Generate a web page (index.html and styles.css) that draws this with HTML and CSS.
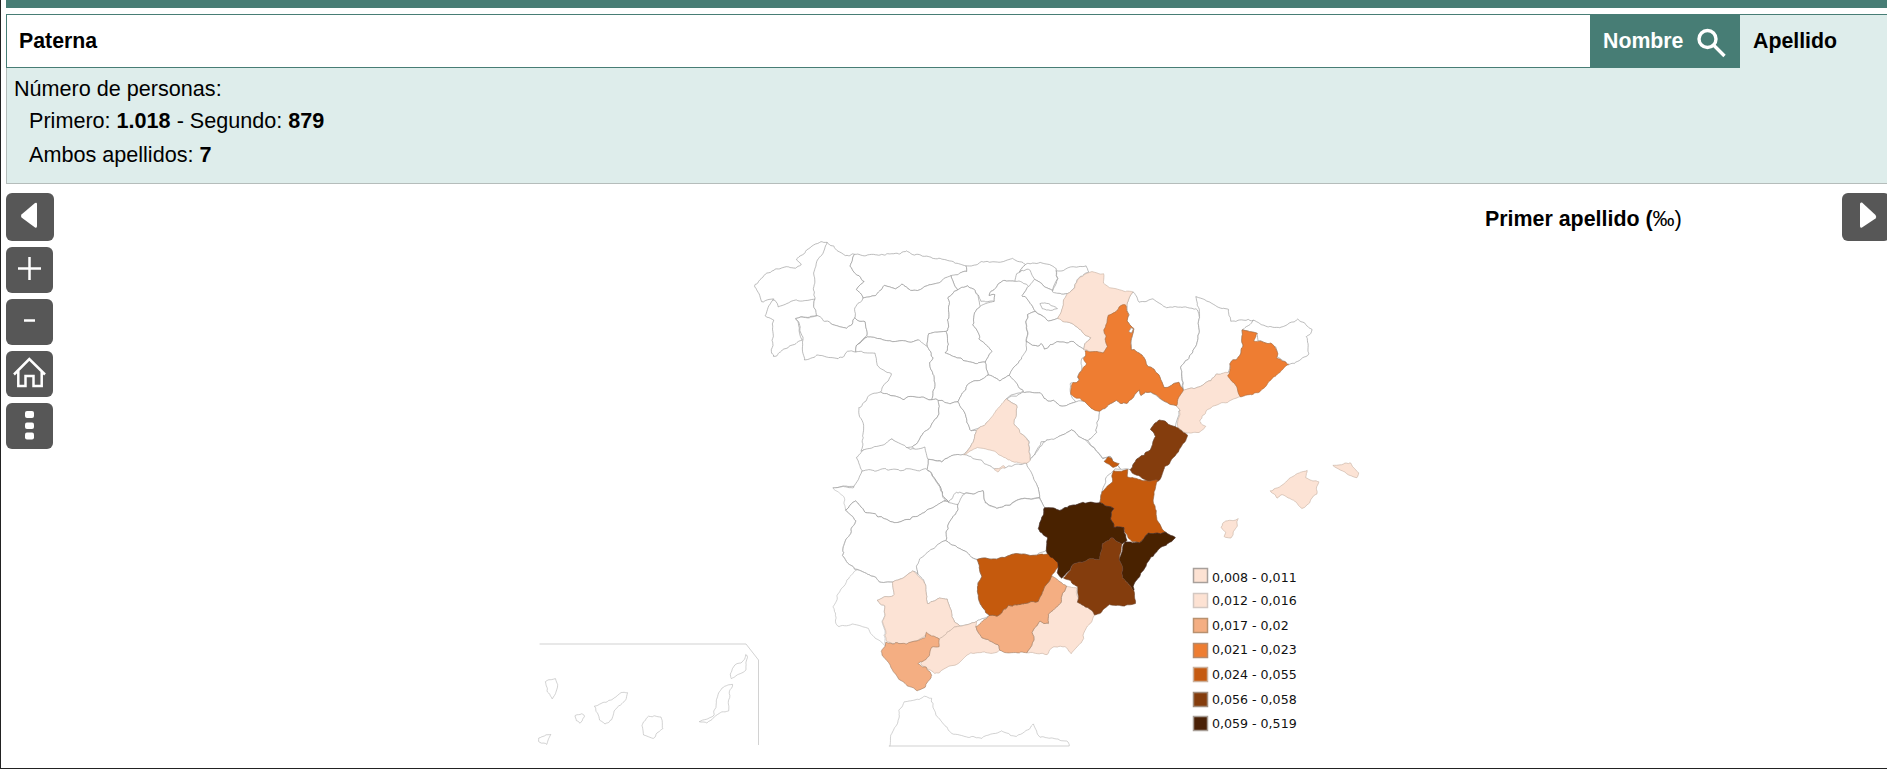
FILE: index.html
```html
<!DOCTYPE html>
<html lang="es">
<head>
<meta charset="utf-8">
<title>Paterna</title>
<link rel="stylesheet" href="styles.css">
<script src="map.js" defer></script>
</head>
<body>
<div class="topbar"></div>
<div class="search">
  <div class="query">Paterna</div>
  <div class="tab active">Nombre
    <svg class="glass" width="30" height="30" viewBox="0 0 30 30"><circle cx="11.500" cy="11" r="8.500"/><path d="M17.500 17l11 11"/></svg>
  </div>
  <div class="tab">Apellido</div>
</div>
<div class="panel">
  <p class="line">Número de personas:</p>
  <p class="line sub">Primero: <b>1.018</b> - Segundo: <b>879</b></p>
  <p class="line sub">Ambos apellidos: <b>7</b></p>
</div>
<main class="map-area">
  <svg class="map" width="1887" height="585" viewBox="0 184 1887 585">
    <defs>
      <filter id="soft" x="-2%" y="-2%" width="104%" height="104%">
        <feGaussianBlur stdDeviation="0.300"/>
      </filter>
    </defs>
    <g id="provinces" filter="url(#soft)">
      <g transform="translate(740 230) scale(.33333)">
        <path class="w" d="M255 35L225 45 170 85 185 100 165 115 100 115 60 145 40 170 60 215 95 210 70 255 95 270 95 380 165 345 185 330 165 265 225 255 218 205 165 210 110 230 95 210"/>
        <path class="w" d="M255 35L218 130 218 205 225 265 270 285 320 295 345 265 365 200 350 175 365 150 325 110 340 75 310 75z"/>
        <path class="w" d="M165 265L225 258 270 285 320 295 345 265 375 280 380 315 345 350 345 365 320 365 290 390 230 375 190 390 185 350 187 320z"/>
        <path class="w" d="M340 75L400 75 460 72 500 58 520 75 600 90 675 105 675 125 635 140 610 150 560 170 510 185 480 165 460 178 430 168 410 190 365 200 350 175 365 150 325 110z"/>
        <path class="w" d="M675 105L770 95 810 85 855 105 825 130 820 150 790 150 750 180 745 200 765 195 760 215 720 215 700 185 680 170 645 175 630 140 675 125z"/>
        <path class="w" d="M365 200L410 190 430 168 460 178 480 165 510 185 560 170 630 140 645 175 625 200 620 300 610 305 565 315 560 350 545 350 530 335 480 335 380 320 345 350 380 315 375 280 345 265 345 235z"/>
        <path class="w" d="M645 175L680 170 700 185 720 225 705 235 700 285 720 330 755 365 735 395 700 400 650 380 610 370 620 340 610 305 620 300 625 200z"/>
        <path class="w" d="M760 215L720 225 705 235 700 285 720 330 755 365 735 395 745 435 775 450 805 435 840 390 860 370 885 350 860 340 860 250 880 245 860 205 840 195 860 170 830 150 790 150 750 180 745 200 765 195z"/>
        <path class="w" d="M855 105L880 100 910 97 950 115 945 150 930 182 880 150 870 120 830 125z"/>
        <path class="w" d="M860 170L880 150 930 182 981 190 969 215 951 264 920 270 880 245 860 205 840 195z"/>
        <path class="w" d="M895 220L910 215 945 240 925 240 900 232z"/>
        <path class="w" d="M345 350L380 320 480 335 530 335 560 350 575 385 565 400 580 450 570 505 540 500 490 505 420 485 450 432 410 415 400 370 345 365z"/>
        <path class="w" d="M420 485L490 505 540 500 592 510 597 550 570 585 540 620 515 655 490 655 450 630 400 660 362 665 370 600 355 535 385 495z"/>
        <path class="w" d="M565 315L610 305 620 340 610 370 650 380 700 400 735 395 745 435 680 465 650 510 630 518 592 510 570 505 580 450 565 400 575 385 560 350z"/>
        <path class="w" d="M592 510L630 518 650 510 690 600 705 600 700 635 670 670 600 695 565 690 515 655 540 620 570 585 597 550z"/>
        <path class="w" d="M650 510L680 465 745 435 775 450 805 435 848 485 820 495 800 510 770 545 735 575 720 590 690 600z"/>
      </g>
      <path class="w" d="M1027 313L1033 312 1047 320 1057 318 1077 327 1090 338 1082 348 1073 343 1057 342 1043 348 1040 342 1035 347 1027 343z"/>
      <path class="w" d="M1008 375L1020 360 1027 343 1035 347 1040 342 1043 348 1057 342 1073 343 1082 348 1085 352 1078 373 1078 382 1070 383 1070 393 1075 402 1060 405 1047 400 1040 393 1023 392z"/>
      <path class="w" d="M1007 400L1023 392 1040 393 1047 400 1060 405 1075 402 1083 403 1097 412 1097 432 1087 442 1083 440 1070 430 1060 436 1052 440 1040 443 1032 458 1030 460 1027 443 1018 430 1013 423 1015 405z"/>
      <path class="w" d="M1032 458L1042 443 1060 436 1070 430 1083 440 1090 447 1100 457 1108 455 1118 468 1113 468 1105 482 1100 492 1098 502 1073 505 1058 510 1043 507 1037 498 1037 487 1027 470 1025 463z"/>
      <path class="w" d="M928 460L940 462 963 453 995 470 1025 463 1037 487 1037 498 1023 498 997 508 985 503 982 492 965 493 955 493 947 502 937 483 927 470z"/>
      <path class="w" d="M832 487L857 485 860 470 855 457 862 452 890 440 910 450 925 448 928 460 927 470 937 483 947 502 942 500 923 513 910 518 893 522 867 513 853 500 845 510 845 498z"/>
      <g transform="translate(1040 250) scale(.33333)">
        <path class="w" d="M50 60L135 45 145 65 120 78 80 130 30 125 45 100z"/>
        <path class="w" d="M275 128L300 155 340 148 375 175 420 168 465 178 478 205 465 290 420 350 428 425 415 400 370 410 355 375 320 350 300 315 270 300 278 235 258 210 260 170z"/>
        <path class="w" d="M465 145L530 170 560 175 570 215 600 210 640 212 650 240 605 245 605 290 590 330 565 340 560 375 530 375 510 395 430 425 420 350 465 290 478 205z"/>
        <path class="w" d="M605 245L640 212 680 225 715 238 770 212 800 225 815 240 795 260 805 310 745 350 705 320 705 290 650 270 650 245z"/>
        <path class="w" d="M170 487L195 465 225 450 245 460 275 450 295 420 300 435 310 420 385 462 405 465 415 470 405 525 355 515 325 540 340 560 330 595 290 625 265 660 235 655 205 615 180 620 150 590 140 575 170 545z"/>
      </g>
      <g transform="translate(810 470) scale(.33333)">
        <path class="w" d="M65 50L130 50 150 0 350 0 380 40 405 90 395 95 340 130 300 145 250 155 170 130 130 90 105 120"/>
        <path class="w" d="M105 120L130 90 170 130 250 155 300 145 340 130 395 95 440 100 430 130 405 180 400 210 330 265 320 310 305 300 245 340 210 335 140 300 130 300 95 260 100 220 135 150z"/>
        <path class="w" d="M440 100L465 70 515 65 525 100 560 115 640 85 680 85 700 110 695 145 685 175 715 205 700 240 680 255 620 250 560 265 500 268 400 210 405 180 430 130z"/>
        <path class="w" d="M325 265L400 210 500 268 510 320 497 350 505 395 535 435 495 455 470 462 445 465 420 440 405 385 385 385 350 400 345 340 320 310z"/>
        <path class="w2" d="M65 50L100 90 105 120 135 150 100 220 95 260 130 300 140 300 110 330 65 410 75 430 80 470 120 465 170 480 218 530 220 410 197 395 245 370 245 340 210 335 140 300"/>
      </g>
      <g transform="translate(520 620) scale(.35714 .33333)">
        <path class="w2 plain" d="M52 72L630 72 665 120 665 375"/>
        <path class="w2" d="M600 135L625 120 628 105 635 115 630 150 585 175 583 160z"/>
        <path class="w2" d="M565 195L588 192 585 230 580 272 535 290 522 305 503 302 540 280 548 240z"/>
        <path class="w2" d="M355 287L390 290 397 325 370 355 345 345 338 320z"/>
        <path class="w2" d="M205 255L250 245 275 222 300 220 295 235 262 270 258 300 235 315 220 300z"/>
        <path class="w2" d="M150 285L170 282 180 295 165 310 150 300z"/>
        <path class="w2" d="M68 180L95 178 103 205 88 240 75 210z"/>
        <path class="w2" d="M50 355L70 342 82 342 72 372 50 365z"/>
        <path class="w2" d="M1030 378L1070 250 1125 235 1130 230 1150 235 1160 285 1215 345 1270 355 1320 340 1345 335 1390 350 1435 315 1450 350 1530 362 1535 378"/>
        <path class="w2 plain" d="M1030 378L1535 378"/>
      </g>
      <g transform="translate(1040 250) scale(.33333)">
        <path class="c1" d="M155 62L190 70 190 100 210 110 275 128 260 170 245 170 205 195 190 240 200 290 185 310 155 305 125 295 150 265 110 230 50 205 70 150 80 130 120 80z"/>
        <path class="c1" d="M565 370L580 405 595 438 540 458 500 480 470 520 495 530 470 545 440 555 410 530 415 470 405 465 428 425 510 395 530 375z"/>
        <path class="c1" d="M685 725L780 665 800 660 795 680 835 695 825 735 785 775 750 745 715 735 705 745z"/>
        <path class="c1" d="M880 650L925 640 950 670 945 685 900 665z"/>
        <path class="c1" d="M538 830L555 815 590 805 585 825 575 840 570 860 550 860 550 845z"/>
        <path class="c4" d="M245 170L258 165 258 210 278 235 270 285 270 300 300 315 320 350 355 375 370 410 415 400 428 425 405 465 385 462 350 440 310 420 300 435 295 420 275 450 245 460 225 450 195 465 170 487 130 460 90 430 98 398 115 395 115 370 135 345 130 300 155 305 185 310 200 290 190 240 205 195z"/>
        <path class="w" d="M263 248L268 230 276 235 272 250z"/>
        <path class="c4" d="M605 245L650 245 640 270 700 285 708 310 705 325 745 348 710 370 670 410 650 428 595 440 580 405 565 380 565 340 590 330 605 290z"/>
        <path class="c6" d="M355 515L405 525 440 560 400 620 375 650 350 695 320 690 300 680 265 660 290 625 330 595 340 560 325 540z"/>
        <path class="c5" d="M200 617L232 640 215 650 185 630z"/>
      </g>
      <g transform="translate(740 230) scale(.33333)">
        <path class="c1" d="M800 510L825 525 820 580 835 600 860 640 870 690 855 700 800 690 760 660 710 650 670 672 700 635 705 600 735 575 770 535z"/>
        <path class="c1" d="M762 722L790 708 795 712 772 728z"/>
      </g>
      <g transform="translate(810 470) scale(.33333)">
        <path class="c1" d="M305 300L345 340 350 400 385 385 405 385 420 440 445 465 430 470 390 510 340 495 290 525 222 515 220 410 197 395 245 370 245 340z"/>
        <path class="c1" d="M495 455L495 470 510 500 560 525 565 545 480 548 450 575 370 610 360 600 330 580 345 560 360 525 390 510 430 470 470 462z"/>
        <path class="c1" d="M770 350L795 355 805 395 850 435 825 470 810 520 780 548 760 530 730 535 705 553 650 545 668 520 665 490 690 458 712 465 715 435 750 400 755 370z"/>
        <path class="c3" d="M222 518L290 522 340 500 345 490 390 510 380 530 360 530 345 570 320 580 345 590 365 615 345 650 320 665 260 630 235 590 210 545z"/>
        <path class="c3" d="M725 320L770 350 755 370 750 400 715 435 712 465 690 458 665 490 668 520 650 545 600 550 565 545 560 525 510 500 495 470 535 435 555 435 595 405 620 405 645 395 680 395 700 350z"/>
        <path class="c5" d="M500 268L560 265 620 250 680 255 725 245 742 285 725 320 700 350 680 395 645 395 620 405 595 405 555 435 535 435 505 395 497 350 510 320z"/>
        <path class="c5" d="M905 0L945 0 945 15 985 30 1040 30 1025 90 1040 150 1060 185 1010 190 985 215 950 205 940 175 910 175 898 150 910 115 865 95 870 65 905 40z"/>
        <path class="c7" d="M700 110L745 120 790 105 865 95 910 115 898 150 910 175 940 175 945 210 930 225 905 205 875 220 865 270 830 270 790 285 755 325 740 310 740 280 700 240 715 205 685 175 695 145z"/>
        <path class="c7" d="M1060 185L1095 205 1060 225 1020 260 1000 290 975 330 965 360 935 325 925 270 940 215 985 215 1010 190z"/>
        <path class="c6" d="M905 205L930 225 925 270 935 325 965 360 970 400 915 410 895 405 850 435 805 395 800 350 760 325 790 285 830 270 865 270 875 220z"/>
      </g>
    </g>
    <g class="legend">
      <rect class="k1" x="1192.500" y="568.500" width="14" height="14"/><text x="1211" y="581.500">0,008 - 0,011</text>
      <rect class="k2" x="1192.500" y="593.500" width="14" height="14"/><text x="1211" y="605">0,012 - 0,016</text>
      <rect class="k3" x="1192.500" y="618.500" width="14" height="14"/><text x="1211" y="630">0,017 - 0,02</text>
      <rect class="k4" x="1192.500" y="643.500" width="14" height="14"/><text x="1211" y="654">0,021 - 0,023</text>
      <rect class="k5" x="1192.500" y="667.500" width="14" height="14"/><text x="1211" y="679">0,024 - 0,055</text>
      <rect class="k6" x="1192.500" y="692.500" width="14" height="14"/><text x="1211" y="704">0,056 - 0,058</text>
      <rect class="k7" x="1192.500" y="716.500" width="14" height="14"/><text x="1211" y="728">0,059 - 0,519</text>
    </g>
  </svg>
  <div class="tools">
    <button class="tool big" type="button"><svg width="48" height="48" viewBox="0 0 48 48"><path class="solid" d="M29 10L15.500 21.500Q14.500 23 15.500 24.500L29 34.500Q31 35.500 31 33V11Q31 9 29 10z"/></svg></button>
    <button class="tool" type="button"><svg width="47" height="46" viewBox="0 0 47 46"><path class="line-i" d="M12 21.500h23M23.500 10v23"/></svg></button>
    <button class="tool" type="button"><svg width="47" height="46" viewBox="0 0 47 46"><path class="line-i" d="M18 21.500h11"/></svg></button>
    <button class="tool" type="button"><svg width="47" height="46" viewBox="0 0 47 46"><path class="line-i" d="M8 23.500L23.300 8 39 23.500M12.300 20V35H19.500V25H27.500V35H35.700V20"/></svg></button>
    <button class="tool" type="button"><svg width="47" height="46" viewBox="0 0 47 46"><rect class="solid" x="19" y="8" width="9" height="7" rx="2"/><rect class="solid" x="19" y="19.500" width="9" height="6.500" rx="2"/><rect class="solid" x="19" y="29.500" width="9" height="7" rx="2"/></svg></button>
  </div>
  <h2 class="title">Primer apellido (<span class="unit">‰)</span></h2>
  <button class="tool big next" type="button"><svg width="48" height="48" viewBox="0 0 48 48"><path class="solid" d="M20 9.500L33.500 22Q35 24 33.500 25.500L20 34.500Q18 35.500 18 33V11Q18 9 20 9.500z"/></svg></button>
</main>
</body>
</html>
```
FILE: styles.css
```css
* { box-sizing: border-box; }
html, body { margin: 0; padding: 0; }
body {
  width: 1887px;
  height: 769px;
  overflow: hidden;
  display: flex;
  flex-direction: column;
  background: #fff;
  border-left: 1px solid #222;
  border-bottom: 1px solid #222;
  font-family: "Liberation Sans", Arial, sans-serif;
  color: #000;
}
.topbar {
  height: 8px;
  margin-left: 5px;
  margin-bottom: 6px;
  background: #477d75;
  flex: none;
}
.search {
  display: flex;
  height: 54px;
  margin-left: 5px;
  flex: none;
  font-size: 21.300px;
  font-weight: 700;
}
.query {
  width: 1584px;
  padding-left: 12px;
  line-height: 52px;
  border: 1px solid #477d75;
  border-right: 0;
}
.tab {
  display: flex;
  align-items: center;
  padding-left: 13px;
  flex: 1;
  background: #deedeb;
  border-top: 1px solid #477d75;
}
.tab.active {
  flex: none;
  width: 150px;
  color: #fff;
  background: #477d75;
}
.glass { margin-left: 13px; margin-top: 2px; fill: none; stroke: #fff; stroke-width: 3.400; }
.panel {
  height: 116px;
  margin-left: 5px;
  padding: 4px 7px;
  flex: none;
  background: #deedeb;
  border-left: 1px solid #b5bdbb;
  border-bottom: 1px solid #b5bdbb;
  font-size: 21.600px;
}
.line { margin: 0; height: 32px; line-height: 33.500px; }
.sub { padding-left: 15px; height: 34px; line-height: 33px; }
.map-area { position: relative; flex: 1; overflow: hidden; }
.map { display: block; }
.w, .w2, .c1, .c3, .c4, .c5, .c6, .c7 { stroke-linejoin: round; stroke-width: .6; }
.w { fill: #fff; stroke: #8f8f8f; }
.w2 { fill: none; stroke: #b4b4b4; }
.c1 { fill: #fce3d5; stroke: #c4aea0; }
.c3 { fill: #f4ae82; stroke: #9c7a62; }
.c4 { fill: #ee7d31; stroke: #a8693c; }
.c5 { fill: #c55a11; stroke: #8c5a35; }
.c6 { fill: #843c0c; stroke: #6d452b; }
.c7 { fill: #4a2106; stroke: #3d2414; }
.legend text { font-family: "DejaVu Sans", Verdana, sans-serif; font-size: 12.600px; fill: #111; }
.legend rect { stroke-width: 1.500; }
.k1 { fill: #fde2d3; stroke: #a8a09b; }
.k2 { fill: #fde2d3; stroke: #d3c8c2; }
.k3 { fill: #f4ae82; stroke: #b8916f; }
.k4 { fill: #ee7d31; stroke: #b58a6c; }
.k5 { fill: #c55a11; stroke: #ccb09a; }
.k6 { fill: #843c0c; stroke: #a08c7c; }
.k7 { fill: #4a2106; stroke: #a89e96; }
.tools {
  position: absolute;
  left: 5px;
  top: 9px;
  display: flex;
  flex-direction: column;
  gap: 6px;
}
.tool {
  display: block;
  width: 47px;
  height: 46px;
  padding: 0;
  border: 0;
  border-radius: 6px;
  background: #575757;
}
.tool svg { display: block; }
.tool.big { width: 48px; height: 48px; }
.solid { fill: #fff; }
.line-i { fill: none; stroke: #fff; stroke-width: 2.500; }
.title {
  position: absolute;
  left: 1484px;
  top: 20px;
  margin: 0;
  font-size: 21.400px;
  font-weight: 700;
  line-height: 30px;
}
.unit { font-weight: 400; font-size: 22px; }
.tool.next { position: absolute; left: 1841px; top: 9px; }
```
FILE: map.js
```js
// Gives the hand-traced province outlines their irregular coast-and-border
// wiggle. The offset depends only on position, so shared borders stay together.
function hash(i, j) {
  var s = Math.sin(i * 127.1 + j * 311.7) * 43758.5453;
  return s - Math.floor(s) - 0.5;
}
function smooth(t) { return t * t * (3 - 2 * t); }
function valueNoise(x, y, seed) {
  var i = Math.floor(x), j = Math.floor(y);
  var u = smooth(x - i), v = smooth(y - j);
  var a = hash(i + seed, j), b = hash(i + 1 + seed, j);
  var c = hash(i + seed, j + 1), d = hash(i + 1 + seed, j + 1);
  return (a + (b - a) * u) * (1 - v) + (c + (d - c) * u) * v;
}
function wiggle(x, y, seed) {
  return valueNoise(x / 9, y / 9, seed) * 3.2 + valueNoise(x / 3.2, y / 3.2, seed + 40) * 1.8;
}
document.querySelectorAll('#provinces path').forEach(function (path) {
  var raw = path.getAttribute('d');
  var closed = /z\s*$/i.test(raw);
  var nums = raw.match(/-?[\d.]+/g).map(Number);
  var sx = 1, sy = 1, tx = 0, ty = 0;
  var tr = path.parentNode.getAttribute('transform');
  if (tr) {
    var m = tr.match(/translate\(([\d.]+) ([\d.]+)\) scale\(([\d.]+)(?: ([\d.]+))?\)/);
    tx = +m[1]; ty = +m[2]; sx = +m[3]; sy = m[4] ? +m[4] : sx;
  }
  var pts = [];
  for (var k = 0; k < nums.length; k += 2) {
    pts.push([nums[k] * sx + tx, nums[k + 1] * sy + ty]);
  }
  if (closed) pts.push(pts[0]);
  var plain = path.classList.contains('plain');
  var out = [];
  for (var n = 0; n < pts.length - 1; n++) {
    var p = pts[n], q = pts[n + 1];
    var len = Math.hypot(q[0] - p[0], q[1] - p[1]);
    var steps = plain ? 1 : Math.max(1, Math.round(len / 1.6));
    for (var s = 0; s < steps; s++) {
      var x = p[0] + (q[0] - p[0]) * s / steps;
      var y = p[1] + (q[1] - p[1]) * s / steps;
      if (!plain) { var dx = wiggle(x, y, 0), dy = wiggle(x, y, 90); x += dx; y += dy; }
      out.push(x.toFixed(2) + ' ' + y.toFixed(2));
    }
  }
  var last = pts[pts.length - 1];
  if (!closed) out.push(last[0].toFixed(2) + ' ' + last[1].toFixed(2));
  path.setAttribute('d', 'M' + out.join('L') + (closed ? 'z' : ''));
});
document.querySelectorAll('#provinces g').forEach(function (g) { g.removeAttribute('transform'); });
```
